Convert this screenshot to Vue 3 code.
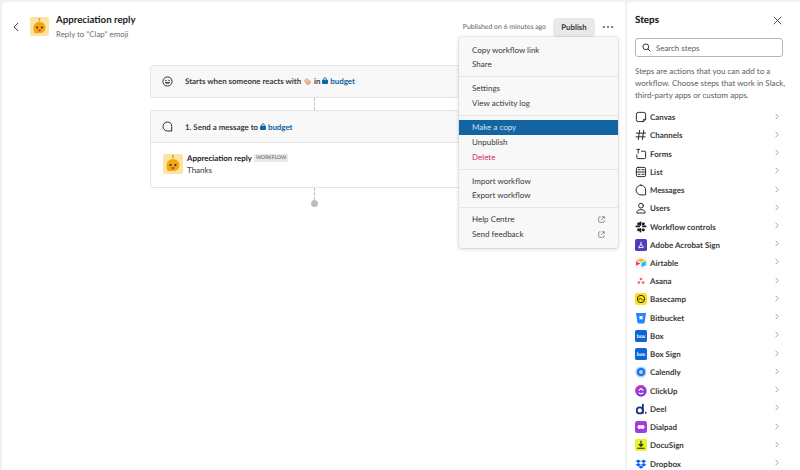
<script setup>
const menu = [
  [{ t: 'Copy workflow link' }, { t: 'Share' }],
  [{ t: 'Settings' }, { t: 'View activity log' }],
  [{ t: 'Make a copy', on: true }, { t: 'Unpublish' }, { t: 'Delete', danger: true }],
  [{ t: 'Import workflow' }, { t: 'Export workflow' }],
  [{ t: 'Help Centre', ext: true }, { t: 'Send feedback', ext: true }],
]
const s = 'fill="none" stroke="#1d1c1d" stroke-width="1" stroke-linecap="round" stroke-linejoin="round"'
const icons = {
  canvas: `<path ${s} d="M9 11.5H3.5a2 2 0 0 1-2-2v-6a2 2 0 0 1 2-2h6a2 2 0 0 1 2 2V9zM9 11.5V9.5a.5.5 0 0 1 .5-.5h2"/>`,
  channels: `<path ${s} d="M5 1.5 3.5 11.5M9.5 1.5 8 11.5M1.5 4.5h10M1 8.5h10"/>`,
  forms: `<path ${s} d="M2 1.5h3M3.5 1.5v4M2 7.5V10.5a1 1 0 0 0 1 1h7.5a1 1 0 0 0 1-1v-6a1 1 0 0 0-1-1H7"/>`,
  list: `<rect ${s} x="1.5" y="1.5" width="10" height="10" rx="1.6"/><path ${s} d="M1.5 6.5h10M3.5 4h2M7.5 4h2.5M3.5 9h2M7.5 9h2.5"/>`,
  messages: `<path ${s} d="M6.5 1.2a5.3 5.3 0 1 0 0 10.6h5V6.5a5.3 5.3 0 0 0-5-5.3z"/>`,
  users: `<circle ${s} cx="6.5" cy="4" r="2.6"/><path ${s} d="M2 11.5c0-2.2 1.6-3.2 4.5-3.2s4.5 1 4.5 3.2z"/>`,
  workflow: `<g fill="#1d1c1d"><rect x="0.5" y="5" width="5" height="1.8" rx=".9"/><rect x="7.5" y="5" width="5" height="1.8" rx=".9"/><rect x="5" y="0.5" width="1.8" height="5" rx=".9"/><rect x="5" y="7.5" width="1.8" height="5" rx=".9"/><rect x="7.5" y="1.5" width="3" height="3" rx="1"/><rect x="2.5" y="8" width="3" height="3" rx="1"/><rect x="2.5" y="1.5" width="3" height="3" rx="1"/><rect x="7.5" y="8" width="3" height="3" rx="1"/></g>`,
  adobe: `<rect width="13" height="13" rx="2" fill="#4b3fc0"/><path d="M6.5 3v2.5L4 9.5M6.5 5.5 9.5 9M4 9.5l5-.5" fill="none" stroke="#fff" stroke-width="1"/>`,
  airtable: `<rect width="13" height="13" rx="2" fill="#f4f4f4"/><path d="M6.3 1.8 1.5 3.6l4.8 1.9 5-1.9z" fill="#fcb400"/><path d="M7 6.2v4.6l4.8-1.9V4.3z" fill="#18bfff"/><path d="M1.2 4.6v4.8l4.6-2.4z" fill="#f82b60"/>`,
  asana: `<g fill="#f06a6a"><circle cx="6.5" cy="4.4" r="1.5"/><circle cx="4.2" cy="8.2" r="1.5"/><circle cx="8.8" cy="8.2" r="1.5"/></g>`,
  basecamp: `<rect width="13" height="13" rx="2.5" fill="#ffe11a"/><circle cx="6.5" cy="6.5" r="4" fill="none" stroke="#1d1c1d" stroke-width="1"/><path d="M4 7.5C5 5.5 6 5 6.8 6.5S8 8.2 9 7" fill="none" stroke="#1d1c1d" stroke-width=".9"/>`,
  bitbucket: `<path d="M1 1h11l-1.6 10.5a1 1 0 0 1-1 .9H3.6a1 1 0 0 1-1-.9z" fill="#2684ff"/><rect x="4.8" y="4.5" width="3.4" height="3.4" fill="#fff"/>`,
  box: `<rect width="13" height="13" rx="2" fill="#0b66d8"/><text x="6.5" y="8.6" text-anchor="middle" font-family="Lato" font-size="5.6" fill="#fff">box</text>`,
  calendly: `<circle cx="6.5" cy="6.5" r="6" fill="#a9cdf7"/><circle cx="6.5" cy="6.5" r="4.4" fill="#1a73e8"/><circle cx="6.5" cy="6.5" r="2.2" fill="#a9cdf7"/>`,
  clickup: `<circle cx="6.5" cy="6.5" r="6.2" fill="#8c3bd9"/><path d="M.8 6.5a5.7 5.7 0 0 1 8.5-5" fill="none" stroke="#f0399a" stroke-width="1.6"/><path d="M4 6 6.5 3.8 9 6" fill="none" stroke="#fff" stroke-width="1.2"/><path d="M3.8 8.2c1.6 1.4 3.8 1.4 5.4 0" fill="none" stroke="#fff" stroke-width="1.2"/>`,
  deel: `<circle cx="5.2" cy="8" r="3.3" fill="none" stroke="#15357a" stroke-width="1.9"/><rect x="7.6" y="1" width="1.9" height="10.5" fill="#15357a"/><circle cx="11.7" cy="10.6" r="1" fill="#15357a"/>`,
  dialpad: `<rect width="13" height="13" rx="2.5" fill="#a23bdc"/><circle cx="4.8" cy="6.5" r="2.2" fill="#fff"/><circle cx="8.2" cy="6.5" r="2.2" fill="#fff"/>`,
  docusign: `<rect width="13" height="13" rx="1.5" fill="#e6f52a"/><path d="M6.5 2v5.5M4 5.5l2.5 2.3L9 5.5M2.5 10h8" fill="none" stroke="#1d1c1d" stroke-width="1.3"/>`,
  dropbox: `<g fill="#0b61ff"><path d="M3.6 1.5 6.5 3.4 3.6 5.3.7 3.4zM9.4 1.5l2.9 1.9-2.9 1.9-2.9-1.9zM3.6 5.3 6.5 7.2 3.6 9.1.7 7.2zM9.4 5.3l2.9 1.9-2.9 1.9-2.9-1.9zM3.7 9.8l2.8-1.8 2.8 1.8-2.8 1.9z"/></g>`,
}
const steps = [
  ['Canvas', 'canvas'], ['Channels', 'channels'], ['Forms', 'forms'], ['List', 'list'],
  ['Messages', 'messages'], ['Users', 'users'], ['Workflow controls', 'workflow'],
  ['Adobe Acrobat Sign', 'adobe'], ['Airtable', 'airtable'], ['Asana', 'asana'],
  ['Basecamp', 'basecamp'], ['Bitbucket', 'bitbucket'], ['Box', 'box'], ['Box Sign', 'box'],
  ['Calendly', 'calendly'], ['ClickUp', 'clickup'], ['Deel', 'deel'], ['Dialpad', 'dialpad'],
  ['DocuSign', 'docusign'], ['Dropbox', 'dropbox'],
].map(([name, key]) => ({ name, svg: icons[key] }))
</script>

<template>
  <div class="page">
    <main class="main">
      <header class="head">
        <svg class="back" width="6" height="10" viewBox="0 0 8 12"><path d="M6.5 1 1.5 6l5 5" fill="none" stroke="#1d1c1d" stroke-width="1.2" stroke-linecap="round" /></svg>
        <svg class="bot" width="19" height="19" viewBox="0 0 20 20">
          <rect width="20" height="20" rx="2" fill="#fde3a4" />
          <path d="M10 1.5v3" stroke="#e8a21a" stroke-width="1.2" /><circle cx="10" cy="2" r="1" fill="#e8a21a" />
          <path d="M10 5a6.4 6.4 0 0 1 6.4 6.4c0 3.4-2.6 5.6-6.2 5.6H4.8c-.8-1.4-1.2-3.6-1.2-5.6A6.4 6.4 0 0 1 10 5z" fill="#f2a60f" />
          <circle cx="7.5" cy="11" r="1" fill="#222" /><circle cx="12.5" cy="11" r="1" fill="#222" />
          <path d="M8.4 13.2h3.2c0 1.4-.8 2-1.6 2s-1.6-.6-1.6-2z" fill="#d9325a" />
        </svg>
        <div class="titles">
          <div class="title">Appreciation reply</div>
          <div class="sub">Reply to "Clap" emoji</div>
        </div>
        <div class="status">Published on 6 minutes ago</div>
        <button class="publish">Publish</button>
        <div class="dots"><i></i><i></i><i></i></div>
      </header>

      <section class="flow">
        <div class="card trigger">
          <svg class="ico" width="11" height="11" viewBox="0 0 11 11"><circle cx="5.5" cy="5.5" r="4.6" fill="none" stroke="#1d1c1d" stroke-width=".9" /><circle cx="3.9" cy="4.4" r=".7" fill="#1d1c1d" /><circle cx="7.1" cy="4.4" r=".7" fill="#1d1c1d" /><path d="M3.2 6.4c.6 1.4 4 1.4 4.6 0z" fill="none" stroke="#1d1c1d" stroke-width=".8" /></svg>
          <span class="label">Starts when someone reacts with
            <svg class="clap" width="9" height="9" viewBox="0 0 10 10"><path d="M1 3.5 4 1l5 4-1.5 3.5L4 9z" fill="#e2b08c" /><path d="M2 2.5 5.5 5" stroke="#fff" stroke-width=".7" /></svg>
            in <span class="chan"><svg width="6" height="7" viewBox="0 0 7 8"><path d="M2 3.5V2.2a1.5 1.5 0 0 1 3 0v1.3" fill="none" stroke="#1264a3" stroke-width=".9" /><rect y="3" width="7" height="5" rx="1" fill="#1264a3" /></svg> budget</span></span>
        </div>
        <div class="dash short"></div>
        <div class="card send">
          <div class="send-head">
            <svg class="ico" width="11" height="11" viewBox="0 0 13 13"><path d="M6.5 1.2a5.3 5.3 0 1 0 0 10.6h5V6.5a5.3 5.3 0 0 0-5-5.3z" fill="none" stroke="#1d1c1d" stroke-width="1.1" /></svg>
            <span class="label">1. Send a message to <span class="chan"><svg width="6" height="7" viewBox="0 0 7 8"><path d="M2 3.5V2.2a1.5 1.5 0 0 1 3 0v1.3" fill="none" stroke="#1264a3" stroke-width=".9" /><rect y="3" width="7" height="5" rx="1" fill="#1264a3" /></svg> budget</span></span>
          </div>
          <div class="send-body">
            <svg width="20" height="20" viewBox="0 0 20 20">
              <rect width="20" height="20" rx="2" fill="#fde3a4" />
              <path d="M10 1.5v3" stroke="#e8a21a" stroke-width="1.2" /><circle cx="10" cy="2" r="1" fill="#e8a21a" />
              <path d="M10 5a6.4 6.4 0 0 1 6.4 6.4c0 3.4-2.6 5.6-6.2 5.6H4.8c-.8-1.4-1.2-3.6-1.2-5.6A6.4 6.4 0 0 1 10 5z" fill="#f2a60f" />
              <circle cx="7.5" cy="11" r="1" fill="#222" /><circle cx="12.5" cy="11" r="1" fill="#222" />
              <path d="M8.4 13.2h3.2c0 1.4-.8 2-1.6 2s-1.6-.6-1.6-2z" fill="#d9325a" />
            </svg>
            <div class="msg">
              <div class="msg-top"><b>Appreciation reply</b><span class="tag">WORKFLOW</span></div>
              <div class="msg-text">Thanks</div>
            </div>
          </div>
        </div>
        <div class="dash long"></div>
        <div class="end"></div>
      </section>

      <nav class="menu">
        <div v-for="(group, g) in menu" :key="g" class="group">
          <div v-for="item in group" :key="item.t" class="item" :class="{ on: item.on, danger: item.danger }">
            <span>{{ item.t }}</span>
            <svg v-if="item.ext" width="7" height="7" viewBox="0 0 8 8"><path d="M3.2 1H1.5a.7.7 0 0 0-.7.7v4.8a.7.7 0 0 0 .7.7h4.8a.7.7 0 0 0 .7-.7V4.8M4.5.8h2.7v2.7M7 1 3.5 4.5" fill="none" stroke="#696969" stroke-width=".8" /></svg>
          </div>
        </div>
      </nav>
    </main>

    <aside class="side">
      <div class="side-head">
        <h2>Steps</h2>
        <svg width="9" height="9" viewBox="0 0 9 9"><path d="M1 1l7 7M8 1 1 8" stroke="#454245" stroke-width=".9" stroke-linecap="round" /></svg>
      </div>
      <div class="search">
        <svg width="9" height="9" viewBox="0 0 9 9"><circle cx="3.8" cy="3.8" r="2.9" fill="none" stroke="#1d1c1d" stroke-width=".9" /><path d="M6 6l2.4 2.4" stroke="#1d1c1d" stroke-width=".9" /></svg>
        <span>Search steps</span>
      </div>
      <p class="desc">Steps are actions that you can add to a workflow. Choose steps that work in Slack, third-party apps or custom apps.</p>
      <ul class="steps">
        <li v-for="step in steps" :key="step.name">
          <svg class="s-ico" width="12" height="12" viewBox="0 0 13 13" v-html="step.svg"></svg>
          <span class="s-name">{{ step.name }}</span>
          <svg class="chev" width="4" height="7" viewBox="0 0 4 7"><path d="M.6.8 3.2 3.5.6 6.2" fill="none" stroke="#8a8a8a" stroke-width=".8" /></svg>
        </li>
      </ul>
    </aside>
  </div>
</template>

<style>
html, body { margin: 0; }
</style>

<style scoped>
.page {
  width: 800px;
  height: 470px;
  box-sizing: border-box;
  padding: 2px 0 0 2px;
  display: flex;
  gap: 2px;
  background: #f1f1f1;
  overflow: hidden;
  font-family: Lato, "Liberation Sans", sans-serif;
  color: #1d1c1d;
  font-size: 9px;
  text-rendering: geometricPrecision;
}
.main {
  position: relative;
  flex: 1;
  background: #fff;
  border-radius: 4px 0 0 0;
}
.head {
  height: 48px;
  display: flex;
  align-items: center;
  padding: 0 12px 0 11px;
}
.head .back { margin: 2px 11px 0 0; }
.head .bot { margin-top: 1px; margin-right: 7px; }
.titles { flex: 1; margin-top: 2px; }
.title { font-size: 9.7px; font-weight: 700; line-height: 14px; }
.sub { font-size: 7.9px; color: #6e6d6e; line-height: 13px; margin-top: 1px; }
.status { font-size: 6.9px; color: #616061; margin: 2px 7px 0 0; }
.publish {
  height: 19px;
  width: 42px;
  padding: 0;
  border: 0;
  border-radius: 4px;
  background: #e9e9e9;
  font: 700 7.8px Lato, sans-serif;
  text-rendering: geometricPrecision;
  color: #3a393a;
  margin-top: 2px;
}
.dots { display: flex; gap: 2px; margin: 2px 0 0 8px; width: 10px; }
.dots i { width: 2px; height: 2px; border-radius: 50%; background: #555; }
.flow {
  width: 328px;
  margin: 14.5px 0 0 148px;
  display: flex;
  flex-direction: column;
  align-items: stretch;
}
.card {
  box-sizing: border-box;
  border: 1px solid #e5e5e5;
  border-radius: 3px;
  background: #fff;
}
.trigger {
  height: 33px;
  background: #f8f8f8;
  display: flex;
  align-items: center;
}
.ico { margin: 0 12px 0 11px; flex: none; }
.label { font-size: 7.9px; font-weight: 700; color: #3b3a3b; white-space: nowrap; }
.clap { vertical-align: -1.5px; }
.chan { color: #1264a3; font-weight: 700; }
.dash {
  align-self: center;
  width: 0;
  border-left: 1px dashed #bdbdbd;
}
.dash.short { height: 12.5px; }
.dash.long { height: 12px; }
.send { height: 78px; display: flex; flex-direction: column; }
.send-head {
  height: 32px;
  box-sizing: border-box;
  background: #f8f8f8;
  border-bottom: 1px solid #e5e5e5;
  border-radius: 3px 3px 0 0;
  display: flex;
  align-items: center;
}
.send-body { display: flex; align-items: center; gap: 4px; padding: 0 13px 2px 12px; flex: 1; }
.msg { line-height: 12px; }
.msg-top { display: flex; align-items: center; gap: 2px; font-size: 7.9px; }
.tag {
  font-size: 5.1px;
  background: #e8e8e8;
  color: #616061;
  padding: 1px 2px;
  border-radius: 1px;
  line-height: 6px;
  font-weight: 400;
}
.msg-text { font-size: 8px; color: #3b3a3b; }
.end {
  align-self: center;
  width: 7px;
  height: 7px;
  border-radius: 50%;
  background: #bdbdbd;
}
.menu {
  position: absolute;
  left: 457px;
  top: 35px;
  width: 159px;
  height: 211px;
  box-sizing: border-box;
  padding: 5.5px 0;
  background: #f8f8f8;
  border-radius: 3px;
  box-shadow: 0 0 0 1px rgba(0, 0, 0, .05), 0 1px 4px rgba(0, 0, 0, .16);
}
.group { padding: 0 0 4.1px; margin-bottom: 4.1px; border-bottom: 1px solid #e6e6e6; }
.group:last-child { border: 0; margin: 0; padding: 0; }
.item {
  height: 14.8px;
  line-height: 14.8px;
  padding: 0 13px;
  font-size: 8px;
  color: #3b3a3b;
  display: flex;
  justify-content: space-between;
  align-items: center;
}
.item.on { background: #1264a3; color: #cfe2f0; }
.item.danger { color: #d3305c; }
.side {
  width: 173px;
  flex: none;
  background: #fff;
  border-radius: 4px 0 0 0;
  padding: 0 17px 0 8px;
  box-sizing: border-box;
}
.side-head {
  height: 36px;
  display: flex;
  justify-content: space-between;
  align-items: center;
  padding-right: 1px;
}
.side-head h2 { margin: 0; font-size: 9.8px; font-weight: 900; }
.search {
  height: 19px;
  box-sizing: border-box;
  border: 1px solid #b4b4b4;
  border-radius: 3px;
  display: flex;
  align-items: center;
  gap: 5px;
  padding-left: 6px;
  color: #616061;
  font-size: 7.9px;
}
.desc {
  margin: 8px 0 0;
  width: 155px;
  font-size: 8px;
  line-height: 12px;
  color: #616061;
}
.steps { list-style: none; margin: 7px 0 0; padding: 0; }
.steps li {
  height: 18.24px;
  display: flex;
  align-items: center;
  font-size: 7.95px;
  font-weight: 700;
  color: #3b3a3b;
}
.s-ico { flex: none; margin-right: 3px; overflow: visible; }
.s-name { flex: 1; }
.chev { flex: none; margin: -2px 4px 0 0; }
</style>
